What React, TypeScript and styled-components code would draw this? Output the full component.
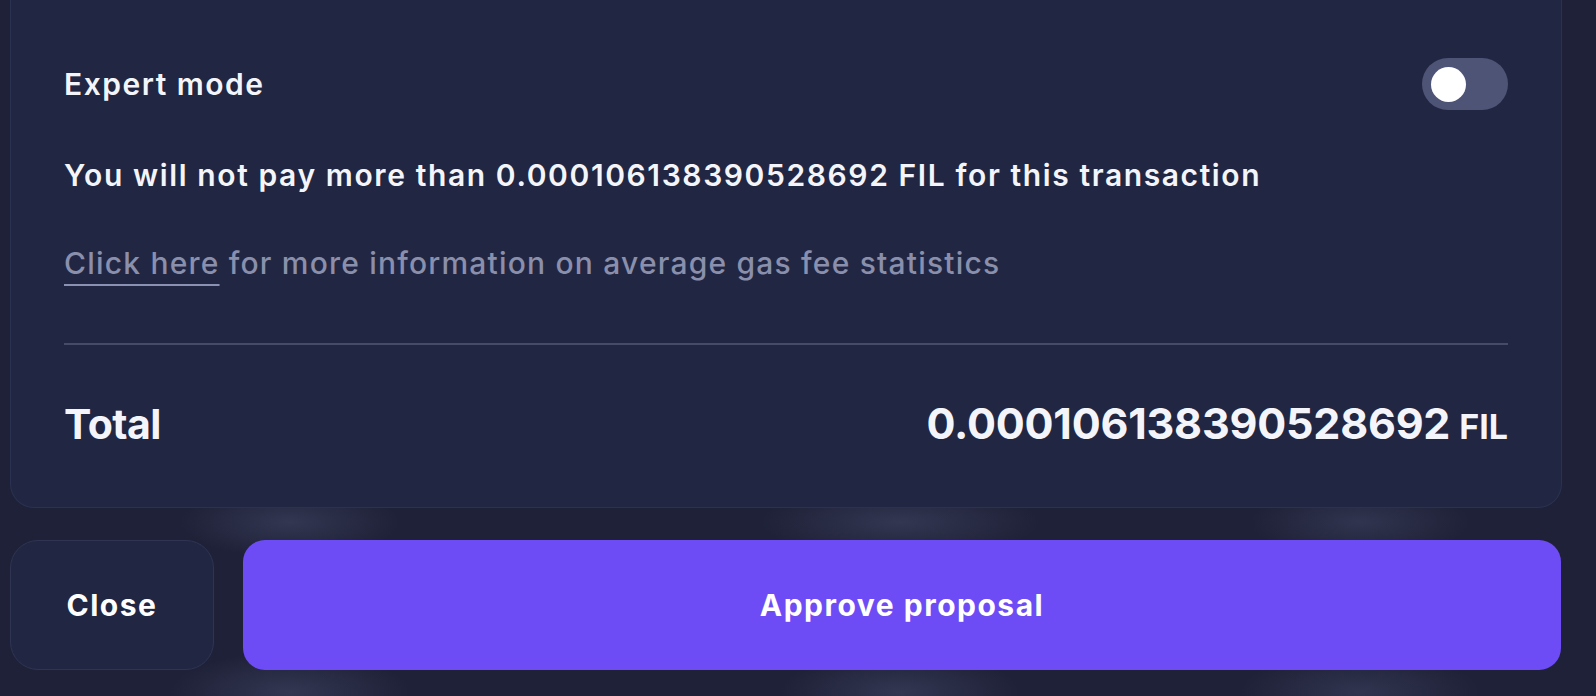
import React, { useState } from 'react';
import styled, { createGlobalStyle } from 'styled-components';

const GlobalStyle = createGlobalStyle`
  html, body {
    margin: 0;
    padding: 0;
    height: 100%;
  }
  body {
    background-color: #1e2137;
    background-image:
      radial-gradient(ellipse 110px 36px at 290px 522px, rgba(72, 76, 108, 0.5), transparent),
      radial-gradient(ellipse 140px 36px at 900px 522px, rgba(72, 76, 108, 0.5), transparent),
      radial-gradient(ellipse 110px 36px at 1360px 522px, rgba(72, 76, 108, 0.45), transparent),
      radial-gradient(ellipse 120px 40px at 290px 692px, rgba(72, 76, 108, 0.5), transparent),
      radial-gradient(ellipse 120px 40px at 900px 692px, rgba(72, 76, 108, 0.5), transparent),
      radial-gradient(ellipse 120px 40px at 1360px 692px, rgba(72, 76, 108, 0.45), transparent);
    font-family: Inter, "Liberation Sans", sans-serif;
    color: #f4f5fa;
    overflow: hidden;
  }
`;

const Page = styled.div`
  width: 1596px;
  height: 696px;
  box-sizing: border-box;
  padding: 0 34px 0 10px;
  display: flex;
  flex-direction: column;
`;

const Card = styled.section`
  background: #212743;
  border: 1px solid #2b3150;
  border-top: none;
  border-radius: 0 0 24px 24px;
  padding: 58px 53px 56px;
  display: flex;
  flex-direction: column;
`;

const Row = styled.div`
  display: flex;
  align-items: center;
  justify-content: space-between;
`;

const Label = styled.span`
  font-size: 30px;
  font-weight: 600;
  line-height: 36px;
  letter-spacing: 1.5px;
`;

const Toggle = styled.button<{ $on: boolean }>`
  width: 86px;
  height: 52px;
  border-radius: 26px;
  border: none;
  padding: 0 9px;
  background: ${({ $on }) => ($on ? '#6d4cf5' : '#4e5476')};
  display: flex;
  align-items: center;
  justify-content: ${({ $on }) => ($on ? 'flex-end' : 'flex-start')};
  cursor: pointer;
`;

const Knob = styled.span`
  width: 35px;
  height: 35px;
  border-radius: 50%;
  background: #ffffff;
`;

const Message = styled.p`
  margin: 47px 0 0;
  font-size: 30px;
  font-weight: 600;
  line-height: 36px;
  letter-spacing: 1.6px;
`;

const Info = styled.p`
  margin: 52px 0 0;
  font-size: 30px;
  font-weight: 500;
  line-height: 36px;
  letter-spacing: 1.2px;
  color: #8a8fac;
`;

const InfoLink = styled.a`
  color: #8a8fac;
  text-decoration: underline;
  text-decoration-color: #8b91b3;
  text-decoration-thickness: 2px;
  text-underline-offset: 10px;
  cursor: pointer;
`;

const Divider = styled.hr`
  margin: 62px 0 0;
  border: none;
  height: 2px;
  background: #454b69;
`;

const TotalRow = styled(Row)`
  margin-top: 54px;
  align-items: baseline;
`;

const TotalLabel = styled.span`
  font-size: 41px;
  font-weight: 700;
  line-height: 48px;
  letter-spacing: -0.5px;
`;

const Amount = styled.span`
  font-size: 43px;
  font-weight: 700;
  line-height: 48px;
  letter-spacing: -0.2px;
`;

const Unit = styled.span`
  margin-left: 9px;
  font-size: 34px;
  font-weight: 700;
  letter-spacing: 0;
`;

const Actions = styled.div`
  margin-top: 32px;
  display: flex;
  gap: 29px;
  padding-right: 1px;
`;

const Button = styled.button<{ $primary?: boolean }>`
  height: 130px;
  border-radius: ${({ $primary }) => ($primary ? '22px' : '28px')};
  font-family: Inter, "Liberation Sans", sans-serif;
  font-size: 30px;
  font-weight: 700;
  letter-spacing: 1.5px;
  color: #ffffff;
  cursor: pointer;
  border: ${({ $primary }) => ($primary ? 'none' : '1px solid #2e3452')};
  background: ${({ $primary }) => ($primary ? '#6d4cf5' : '#212743')};
  flex: ${({ $primary }) => ($primary ? '1' : '0 0 204px')};
`;

export default function App() {
  const [expert, setExpert] = useState(false);
  const fee = '0.000106138390528692';

  return (
    <>
      <GlobalStyle />
      <Page>
        <Card>
          <Row>
            <Label>Expert mode</Label>
            <Toggle $on={expert} onClick={() => setExpert(!expert)} aria-label="Expert mode">
              <Knob />
            </Toggle>
          </Row>
          <Message>You will not pay more than {fee} FIL for this transaction</Message>
          <Info>
            <InfoLink>Click here</InfoLink> for more information on average gas fee statistics
          </Info>
          <Divider />
          <TotalRow>
            <TotalLabel>Total</TotalLabel>
            <Amount>
              {fee}
              <Unit>FIL</Unit>
            </Amount>
          </TotalRow>
        </Card>
        <Actions>
          <Button>Close</Button>
          <Button $primary>Approve proposal</Button>
        </Actions>
      </Page>
    </>
  );
}
